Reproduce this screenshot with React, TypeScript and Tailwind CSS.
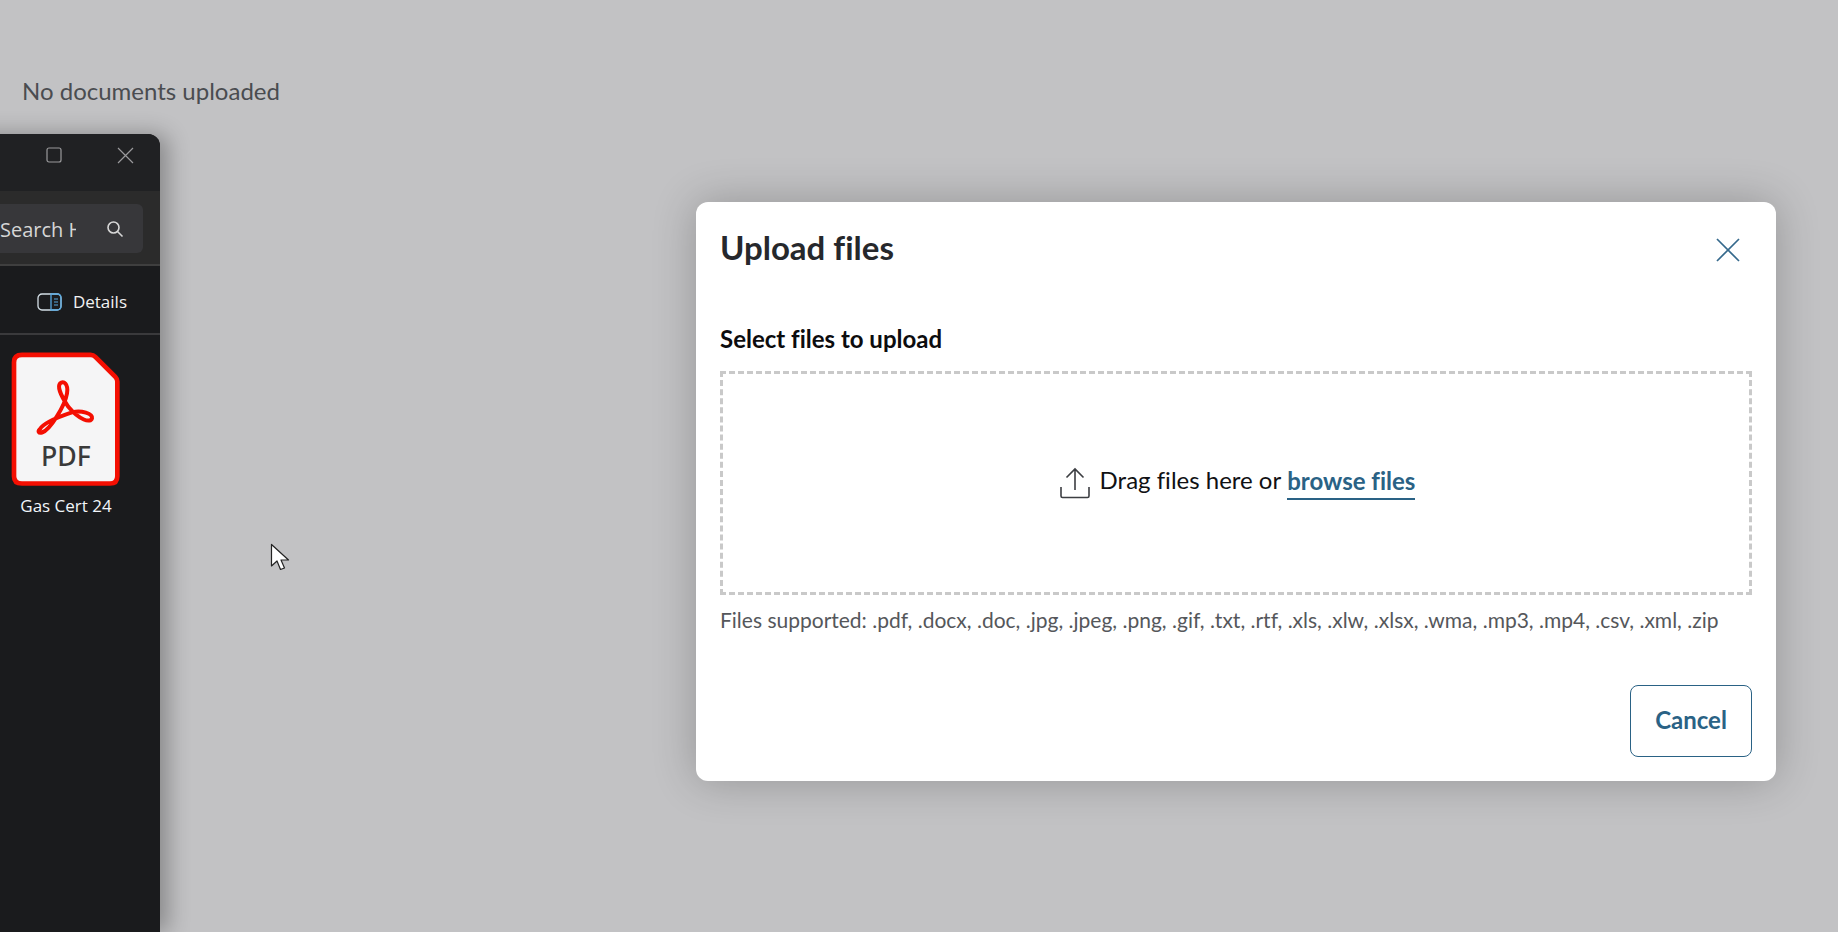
import React from "react";

function PdfIcon() {
  return (
    <svg width="110" height="137" viewBox="30 60 330 410" className="block">
      <path d="M 105 74 L 272 74 Q 280 74 286 80 L 346 140 Q 352 146 352 154 L 352 438 Q 352 460 330 460 L 66 460 Q 42 460 42 438 L 42 96 Q 42 74 66 74 Z" fill="#f5f5f6" stroke="#f40f02" strokeWidth="14" strokeLinejoin="round" />
      <path d="M 119 298 C 128 280 176 260 218 246 C 244 240 278 250 276 264 C 272 280 238 270 205 230 C 190 208 170 172 180 160 C 190 150 206 160 201 190 C 195 226 150 300 126 307 C 116 310 113 304 119 298 Z" fill="none" stroke="#f40f02" strokeWidth="12" strokeLinejoin="round" />
      <text x="198" y="408" textAnchor="middle" fontSize="80" fontWeight="500" fill="#3a3a3a" fontFamily="'Noto Sans',sans-serif">PDF</text>
    </svg>
  );
}

function ExplorerWindow() {
  return (
    <div className="absolute left-[-300px] top-[134px] bottom-0 w-[460px] flex flex-col bg-[#1a1b1d] rounded-tr-xl overflow-hidden shadow-[8px_0_22px_rgba(0,0,0,0.3)] [font-family:'Open_Sans',sans-serif]">
      <div className="h-[57px] shrink-0 bg-[#202123] flex items-start justify-end pt-[13px] text-[#9a9a9c]">
        <svg width="16" height="16" viewBox="0 0 16 16" fill="none" stroke="currentColor" strokeWidth="1.2" className="mr-[55px] ml-[1px]">
          <rect x="1" y="1" width="14" height="14" rx="2" />
        </svg>
        <svg width="17" height="17" viewBox="0 0 17 17" fill="none" stroke="currentColor" strokeWidth="1.2" className="mr-[26px]">
          <path d="M1 1L16 16M16 1L1 16" />
        </svg>
      </div>
      <div className="h-[75px] shrink-0 bg-[#2b2b2b] border-b-2 border-[#3f3f3f] flex items-start justify-end pt-[13px] pr-[17px]">
        <div className="w-[300px] h-[49px] rounded-md bg-[#37373a] flex items-center text-[#d6d6d6]">
          <div className="ml-[157px] w-[76px] overflow-hidden whitespace-nowrap text-[20px] pt-[2px]">Search Home</div>
          <svg width="18" height="18" viewBox="0 0 18 18" fill="none" stroke="currentColor" strokeWidth="1.6" className="ml-[30px]">
            <circle cx="7.5" cy="7.5" r="5.5" />
            <path d="M11.5 11.5L16.5 16.5" />
          </svg>
        </div>
      </div>
      <div className="h-[69px] shrink-0 border-b-2 border-[#3a3a3c] flex items-center justify-end pt-[4px] pr-[33px] text-[#f2f2f2]">
        <svg width="25" height="18" viewBox="0 0 25 18" fill="none" className="mr-[11px]">
          <rect x="1" y="1" width="23" height="16" rx="4" stroke="#d4dfe6" strokeWidth="1.3" />
          <path d="M14 1H20Q24 1 24 5V13Q24 17 20 17H14Z" stroke="#56a8e0" strokeWidth="1.3" />
          <path d="M17 6H21M17 9H21M17 12H21" stroke="#56a8e0" strokeWidth="1.2" />
        </svg>
        <span className="text-[17px]">Details</span>
      </div>
      <div className="flex flex-col items-start pl-[310px] pt-[15px]">
        <PdfIcon />
        <span className="mt-[6px] text-[17px] text-[#f2f6fa] w-[112px] text-center whitespace-nowrap">Gas Cert 24</span>
      </div>
    </div>
  );
}

function UploadDialog() {
  return (
    <div className="absolute left-[696px] top-[202px] w-[1080px] h-[579px] bg-white rounded-xl shadow-[0_0_44px_rgba(0,0,0,0.24)] px-[24px] flex flex-col [font-family:Lato,sans-serif] [font-variant-ligatures:none]">
      <div className="h-[93px] shrink-0 flex items-center justify-between pb-[1px]">
        <h2 className="text-[33px] font-bold text-[#26282c]">Upload files</h2>
        <svg width="24" height="24" viewBox="0 0 24 24" fill="none" stroke="#35698c" strokeWidth="1.7" className="mr-[12px] mt-[4px]">
          <path d="M1 1L23 23M23 1L1 23" />
        </svg>
      </div>
      <div className="mt-[28px] text-[24px] font-bold leading-[32px] text-[#0c0c0e]">Select files to upload</div>
      <div className="mt-[16px] h-[224px] shrink-0 border-[3px] border-dashed border-[#c9c9c9] flex items-center justify-center pl-[2px]">
        <svg width="32" height="32" viewBox="0 0 32 32" fill="none" stroke="#3c3e42" strokeWidth="1.6" className="mr-[9px]">
          <path d="M16 2V23M7.5 10.5L16 2L24.5 10.5" />
          <path d="M2 20V29Q2 30.5 3.5 30.5H28.5Q30 30.5 30 29V20" />
        </svg>
        <span className="text-[24px] text-[#101114] -translate-y-[3px]">Drag files here or</span>
        <span className="ml-[6px] text-[24px] font-bold text-[#2a6285] border-b-2 border-[#2a6285] leading-[26px] pb-[4px] translate-y-[1px]">browse files</span>
      </div>
      <div className="mt-[11px] text-[21px] leading-[28px] text-[#55575b]">
        Files supported: .pdf, .docx, .doc, .jpg, .jpeg, .png, .gif, .txt, .rtf, .xls, .xlw, .xlsx, .wma, .mp3, .mp4, .csv, .xml, .zip
      </div>
      <div className="mt-[51px] flex justify-end">
        <button className="w-[122px] h-[72px] rounded-lg border-[1.5px] border-[#2a6285] pb-[2px] text-[24px] font-bold text-[#2a6285]">Cancel</button>
      </div>
    </div>
  );
}

export default function App() {
  return (
    <div className="relative w-[1838px] h-[932px] overflow-hidden bg-[#c2c2c4]">
      <div className="pl-[22px] pt-[75px] text-[24px] leading-[32px] text-[#4a4c50] [font-family:Lato,sans-serif]">No documents uploaded</div>
      <ExplorerWindow />
      <UploadDialog />
      <svg width="20" height="29" viewBox="0 0 20 29" className="absolute left-[270px] top-[543px]">
        <path d="M1.5 1.5V23L7 18L10.5 26.5L14.5 25L11 17H18.5Z" fill="#fff" stroke="#222" strokeWidth="1.2" strokeLinejoin="round" />
      </svg>
    </div>
  );
}
